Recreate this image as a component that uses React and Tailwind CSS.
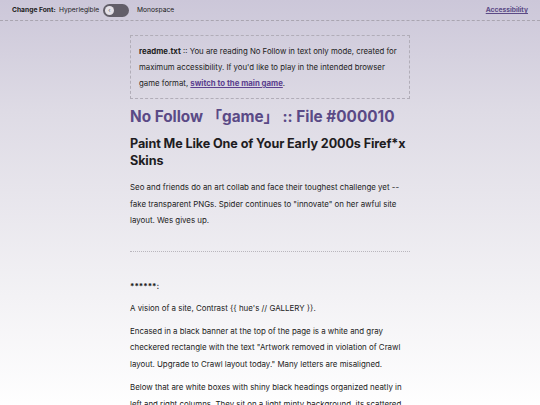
export default function App() {
  return (
    <div
      className="min-h-[405px] w-full bg-[linear-gradient(180deg,#ccc7d9_0%,#dedbe5_27%,#f3f2f5_72%,#ffffff_100%)] text-[#222]"
      style={{ fontFamily: "Inter, 'Noto Sans CJK JP', sans-serif" }}
    >
      <header className="flex h-[21px] items-center justify-between border-b border-dashed border-[#a9a5b0] px-[12px] text-[6.7px]">
        <div className="flex items-center">
          <span className="w-[47px] whitespace-nowrap font-bold">Change Font:</span>
          <span className="w-[44px] whitespace-nowrap">Hyperlegible</span>
          <span className="flex h-[13px] w-[26px] items-center rounded-full bg-[#625e69] px-[2px]">
            <span className="flex h-[9px] w-[9px] items-center justify-center rounded-full bg-[#e4e1e8] text-[6px] leading-none text-[#625e69]">‹</span>
          </span>
          <span className="ml-[8px]">Monospace</span>
        </div>
        <a className="font-bold text-[#5b4a86] underline">Accessibility</a>
      </header>

      <main className="mx-auto w-[280px] pt-[14px]">
        <div className="border border-dashed border-[#b1adb8] pb-[7px] pl-[8px] pr-[7px] pt-[7px] text-[7.8px] leading-[16px]">
          <span className="font-bold">readme.txt</span> :: You are reading No Follow in text only mode, created for maximum accessibility. If you'd like to play in the intended browser game format, <a className="font-bold text-[#5b3f8f] underline">switch to the main game</a>.
        </div>

        <h1 className="mt-[6px] text-[15.3px] font-bold leading-[24px] text-[#5a4a86]">
          No Follow 「game」 :: File #000010
        </h1>
        <h2 className="mt-[6px] text-[12.6px] font-bold leading-[17px] tracking-[-0.1px] text-[#1e1c22]">
          Paint Me Like One of Your Early 2000s Firef*x Skins
        </h2>

        <p className="mt-[10px] text-[7.9px] leading-[16.5px]">
          Seo and friends do an art collab and face their toughest challenge yet -- fake transparent PNGs. Spider continues to "innovate" on her awful site layout. Wes gives up.
        </p>

        <div className="mt-[22px] border-t border-dotted border-[#b9b6bd]" />

        <p className="mt-[26px] text-[7.9px] font-bold leading-[16px]">******:</p>
        <p className="mt-[6px] text-[7.9px] leading-[16px]">A vision of a site, Contrast {"{{"} hue's // GALLERY {"}}"}.</p>
        <p className="mt-[7px] text-[7.9px] leading-[16.5px]">
          Encased in a black banner at the top of the page is a white and gray checkered rectangle with the text "Artwork removed in violation of Crawl layout. Upgrade to Crawl layout today." Many letters are misaligned.
        </p>
        <p className="mt-[7px] text-[7.9px] leading-[16.5px]">
          Below that are white boxes with shiny black headings organized neatly in left and right columns. They sit on a light minty background, its scattered
        </p>
      </main>
    </div>
  );
}
